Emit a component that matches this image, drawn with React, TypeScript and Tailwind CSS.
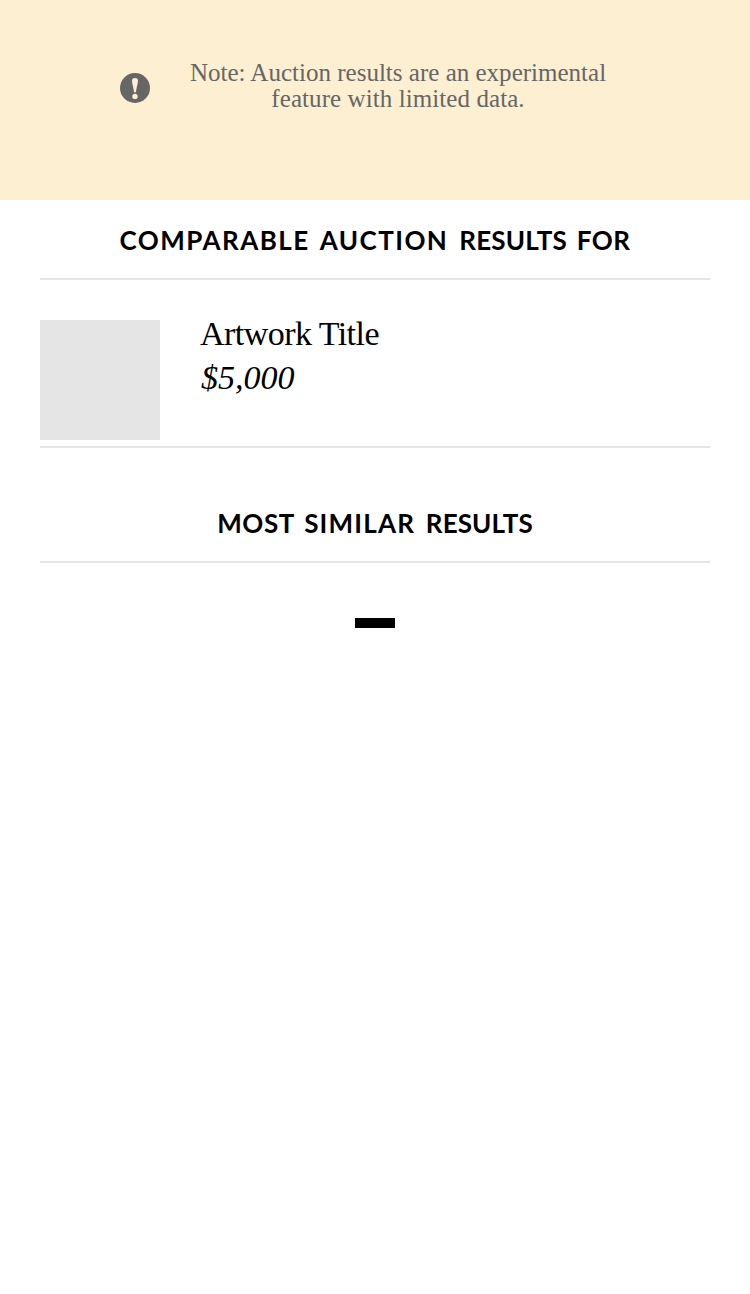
import type { ReactNode } from "react";

const serif = "font-['Liberation_Serif',serif]";

function Notice() {
  return (
    <div className={`flex h-[200px] items-start bg-[#fdefd1] pl-[120px] pt-[60px] text-[#666666] ${serif}`}>
      <svg className="mt-[13px] size-[30px] shrink-0" viewBox="0 0 30 30">
        <circle cx="15" cy="15" r="15" fill="#666666" />
        <path d="M15 5C12.8 5 11.9 6.2 12 8C12.3 11.5 13.7 15 14 19.2H16C16.3 15 17.7 11.5 18 8C18.1 6.2 17.2 5 15 5Z" fill="#fdefd1" />
        <circle cx="15" cy="23.4" r="2.7" fill="#fdefd1" />
      </svg>
      <p className="ml-10 flex w-[416px] flex-col items-center whitespace-nowrap text-[25px] leading-[26px]">
        <span className="tracking-[0.01px]">Note: Auction results are an experimental</span>
        <span className="tracking-[0.08px]">feature with limited data.</span>
      </p>
    </div>
  );
}

function SectionTitle({ children, className = "" }: { children: ReactNode; className?: string }) {
  return (
    <h2 className={`h-[54px] whitespace-nowrap border-b-2 border-[#e5e5e5] text-center font-[Lato,sans-serif] text-[26px] font-bold leading-7 text-black [word-spacing:3.2px] ${className}`}>
      {children}
    </h2>
  );
}

export default function App() {
  return (
    <div className="min-h-[1294px] bg-white">
      <Notice />
      <main className="flex flex-col px-10 pt-[26px]">
        <SectionTitle>
          <span className="tracking-[1.45px]">COMPARABLE AUCTION </span>
          <span className="tracking-[0.2px]">RESULTS </span>
          <span className="tracking-[0.5px]">FOR</span>
        </SectionTitle>
        <div className="flex h-[168px] items-start gap-10 border-b-2 border-[#e5e5e5] pt-10">
          <div className="size-[120px] bg-[#e5e5e5]" />
          <div className={`-mt-2 flex flex-col items-start whitespace-nowrap text-[34px] leading-[44px] text-black ${serif}`}>
            <span className="tracking-[-0.55px]">Artwork Title</span>
            <em className="ml-px">$5,000</em>
          </div>
        </div>
        <SectionTitle className="mt-[61px]">
          <span className="tracking-[0.55px]">MOST </span>
          <span className="tracking-[1.2px]">SIMILAR </span>
          <span className="tracking-[0.1px]">RESULTS</span>
        </SectionTitle>
        <div className="mt-[55px] h-[10px] w-10 self-center bg-black" />
      </main>
    </div>
  );
}
